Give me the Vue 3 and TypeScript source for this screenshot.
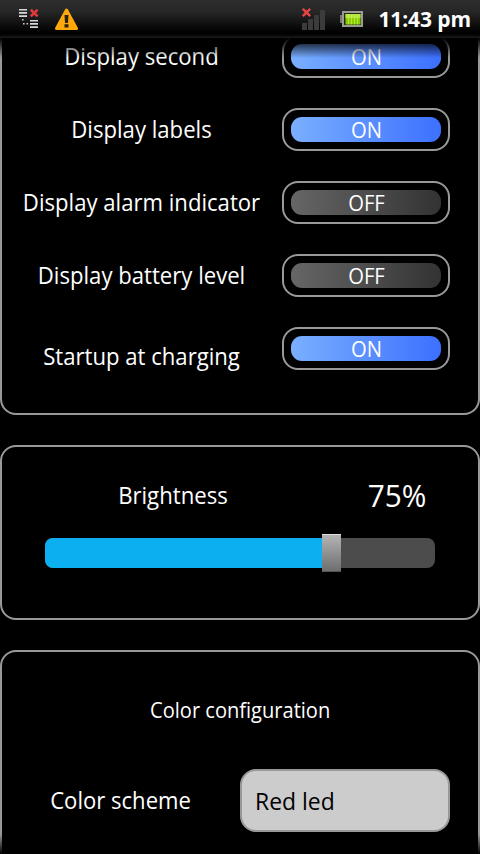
<script setup lang="ts">
import { ref } from 'vue'

interface Option {
  label: string
  on: boolean
  cls?: string
}

const options = ref<Option[]>([
  { label: 'Display second', on: true },
  { label: 'Display labels', on: true },
  { label: 'Display alarm indicator', on: false },
  { label: 'Display battery level', on: false },
  { label: 'Startup at charging', on: true, cls: 'low' },
])
const brightness = ref(75)
const scheme = ref('Red led')
</script>

<template>
  <div class="screen">
    <header class="status">
      <svg class="net" width="20" height="20" viewBox="0 0 20 20">
        <path d="M0 .7h8M0 3.9h8M0 7.1h8M11 11.7h8M11 14.9h8M11 18.1h8" stroke="#d8d8d8" stroke-width="1.6" />
        <path d="M3 10h1.6v1.6h-1.6zM4 14h1.6v1.6h-1.6zM7.5 14h1.6v1.6h-1.6z" fill="#ccc" />
        <path d="M11.8 .6l6.8 6.8M18.6 .6l-6.8 6.8" stroke="#e03a3a" stroke-width="2.6" />
      </svg>
      <svg class="warn" width="24" height="23" viewBox="0 0 24 23">
        <path d="M11.5 2L21.5 20.5H1.5z" fill="#ffa80c" stroke="#ffa80c" stroke-width="3" stroke-linejoin="round" />
        <path d="M9.5 7h4l-.5 8h-3zM9.5 16.3h4v3.2h-4z" fill="#2a2111" />
      </svg>
      <span class="spacer"></span>
      <svg class="signal" width="24" height="22" viewBox="0 0 24 22">
        <path d="M0 15h5v7H0zM6 11h5v11H6zM12 7h5v15h-5zM18 2h5v20h-5z" fill="#3b3b3b" />
        <path d="M.8 .8l7.4 7.4M8.2 .8l-7.4 7.4" stroke="#e84545" stroke-width="2.4" />
      </svg>
      <svg class="battery" width="23" height="16" viewBox="0 0 23 16">
        <path d="M0 4h2v8H0z" fill="#77796f" />
        <path d="M3 1h19v14H3z" fill="#26281f" stroke="#9a9b93" stroke-width="2" />
        <path d="M5.5 3h15v10.5h-15z" fill="#8ad000" />
        <path d="M5.5 3h15v4h-15z" fill="#b4e63c" />
        <path d="M8.5 3v10.5M11.5 3v10.5M14.5 3v10.5M17.5 3v10.5" stroke="#c4ec5c" stroke-width=".7" />
      </svg>
      <span class="clock">11:43 pm</span>
    </header>

    <main class="scroll">
      <section class="panel options">
        <div v-for="o in options" :key="o.label" class="row">
          <span class="label" :class="o.cls">{{ o.label }}</span>
          <button class="switch" @click="o.on = !o.on">
            <span class="track" :class="{ on: o.on }">
              <span class="state">{{ o.on ? 'ON' : 'OFF' }}</span>
            </span>
          </button>
        </div>
      </section>

      <section class="panel bright">
        <div class="bright-head">
          <span class="name">Brightness</span>
          <span class="value">{{ brightness }}%</span>
        </div>
        <div class="slider">
          <div class="fill" :style="{ flexBasis: brightness + '%' }"></div>
          <div class="thumb"></div>
        </div>
      </section>

      <section class="panel colors">
        <h2 class="title">Color configuration</h2>
        <div class="scheme">
          <span class="scheme-label">Color scheme</span>
          <div class="select"><span class="choice">{{ scheme }}</span></div>
        </div>
      </section>
      <div class="fade top"></div>
      <div class="fade bottom"></div>
    </main>
  </div>
</template>

<style>
body {
  background: #000;
}
</style>

<style scoped>
.screen {
  width: 480px;
  height: 854px;
  display: flex;
  flex-direction: column;
  overflow: hidden;
  background: #000;
  color: #fff;
  font-family: 'Open Sans', 'Noto Sans', sans-serif;
  font-size: 24px;
  white-space: nowrap;
}
.status {
  flex: none;
  height: 38px;
  box-sizing: border-box;
  padding: 0 9px 0 19px;
  display: flex;
  align-items: center;
  background: linear-gradient(#2d2d2d 0, #262626 12px, #0a0a0a 27px, #000 33px, #050505 35px, #1c1c1c 38px);
}
.net { margin-top: -1px; }
.warn { margin-left: 16px; }
.spacer { flex: 1; }
.signal { margin-right: 14px; }
.battery { margin-right: 14px; }
.clock {
  font-size: 21px;
  font-weight: 700;
  width: 94px;
  line-height: 38px;
  text-align: right;
  letter-spacing: -0.1px;
}
.scroll {
  flex: 1;
  min-height: 0;
  position: relative;
  overflow: hidden;
  display: flex;
  flex-direction: column;
  gap: 30px;
}
.panel {
  flex: none;
  box-sizing: border-box;
  border: 2px solid #999;
  border-radius: 16px;
}
.options {
  margin-top: -20px;
  height: 397px;
  padding: 15px 28px 0 0;
  display: flex;
  flex-direction: column;
  gap: 30px;
}
.row {
  height: 43px;
  display: flex;
  align-items: center;
}
.label {
  width: 279px;
  margin-right: 1px;
  flex: none;
  text-align: center;
  line-height: 41px;
  padding-bottom: 2px;
  transform: scaleX(0.922);
}
.label.low { padding-top: 15px; }
.switch {
  width: 168px;
  height: 43px;
  box-sizing: border-box;
  padding: 7px;
  border: 2px solid #999;
  border-radius: 16px;
  background: #000;
  color: inherit;
  font: inherit;
}
.track {
  display: block;
  height: 25px;
  border-radius: 11px;
  background: linear-gradient(90deg, #666, #333);
  font-size: 22px;
  line-height: 25px;
  text-align: center;
}
.track.on { background: linear-gradient(90deg, #7aafff, #3c70ff); }
.state {
  display: block;
  padding-left: 1px;
  transform: scaleX(0.92);
}
.bright {
  height: 175px;
  padding: 27px 43px 0;
}
.bright-head {
  display: flex;
  align-items: center;
  height: 42px;
}
.name {
  width: 256px;
  text-align: center;
  line-height: 42px;
  transform: scaleX(0.924);
}
.value {
  flex: 1;
  padding-right: 9px;
  text-align: right;
  font-size: 31px;
  transform: scaleX(0.96);
  transform-origin: right;
}
.slider {
  margin-top: 22px;
  height: 30px;
  display: flex;
  align-items: center;
  border-radius: 8px;
  background: #4c4c4c;
}
.fill {
  height: 30px;
  margin-right: -16px;
  border-radius: 8px 0 0 8px;
  background: #0cafef;
}
.thumb {
  width: 19px;
  height: 38px;
  box-sizing: border-box;
  border-top: 1px solid #ddd;
  border-bottom: 1px solid #555;
  background: linear-gradient(#b4b4b4, #6e6e6e);
  z-index: 1;
}
.colors {
  height: 240px;
  padding: 41px 28px 0 0;
}
.title {
  margin: 0;
  padding-left: 31px;
  font-size: 22px;
  font-weight: 400;
  line-height: 32px;
  text-align: center;
  transform: scaleX(0.912);
}
.scheme {
  margin-top: 44px;
  display: flex;
  align-items: center;
}
.scheme-label {
  flex: 1;
  text-align: center;
  padding: 0 1px 2px 0;
  transform: scaleX(0.92);
}
.select {
  width: 210px;
  height: 63px;
  box-sizing: border-box;
  padding: 0 13px;
  border: 2px solid #999;
  border-radius: 16px;
  background: #ccc;
  color: #000;
  line-height: 60px;
}
.choice {
  display: inline-block;
  transform: scaleX(0.955);
  transform-origin: left;
}
.fade {
  position: absolute;
  left: 0;
  right: 0;
  height: 20px;
  pointer-events: none;
}
.fade.top {
  top: 0;
  background: linear-gradient(#000, transparent);
}
.fade.bottom {
  bottom: 0;
  background: linear-gradient(transparent, #000);
}
</style>
